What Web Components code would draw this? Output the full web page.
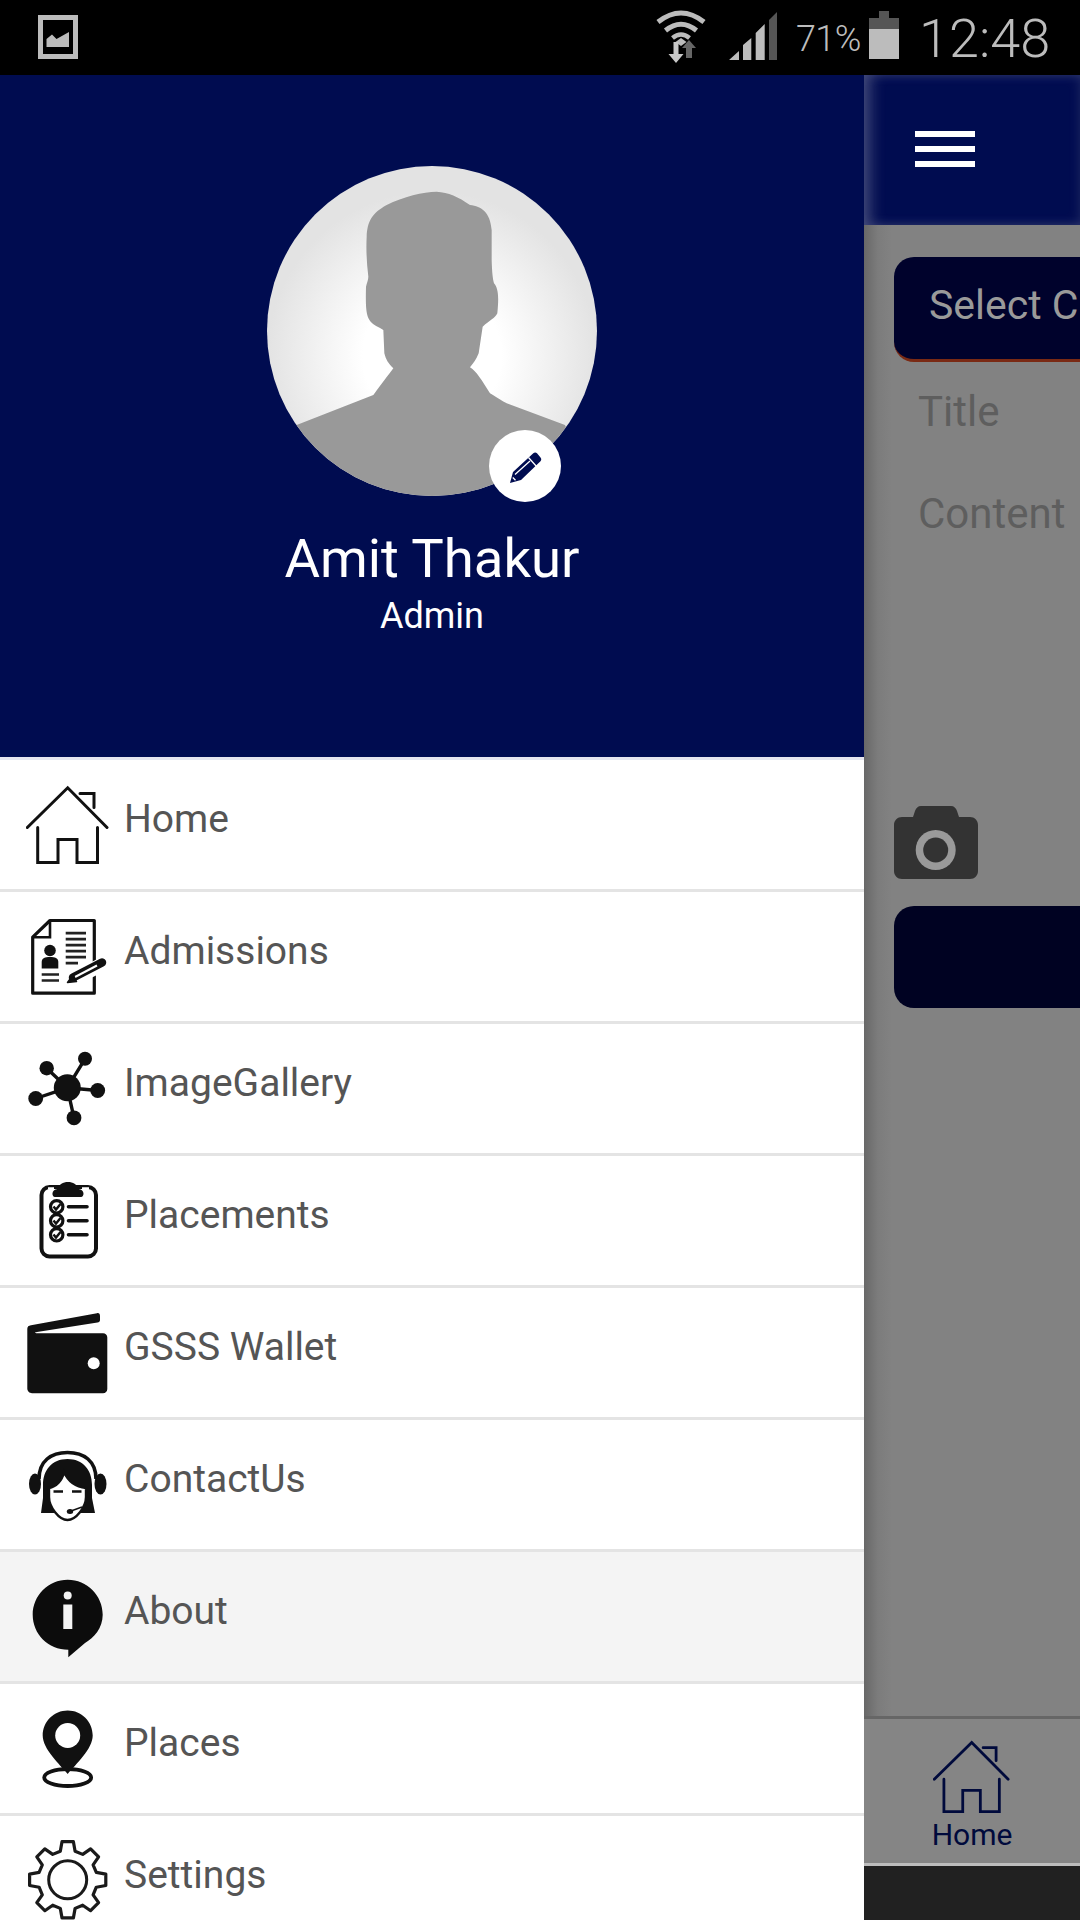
<!DOCTYPE html>
<html lang="en">
<head>
<meta charset="utf-8">
<title>Drawer</title>
<style>
  html, body { margin: 0; padding: 0; background: #000; }
  body { width: 1080px; height: 1920px; overflow: hidden; font-family: Roboto, "Liberation Sans", sans-serif; }
  phone-screen { height: 1920px; }
</style>
</head>
<body>
<phone-screen>
  <status-bar slot="status"></status-bar>
  <nav-drawer slot="drawer">
    <profile-card name="Amit Thakur" role="Admin"></profile-card>
    <menu-item icon="home">Home</menu-item>
    <menu-item icon="admissions">Admissions</menu-item>
    <menu-item icon="gallery">ImageGallery</menu-item>
    <menu-item icon="placements">Placements</menu-item>
    <menu-item icon="wallet">GSSS Wallet</menu-item>
    <menu-item icon="contact">ContactUs</menu-item>
    <menu-item icon="about" active>About</menu-item>
    <menu-item icon="places">Places</menu-item>
    <menu-item icon="settings">Settings</menu-item>
  </nav-drawer>
  <main-panel slot="main"></main-panel>
</phone-screen>

<script>
function gearPath() {
  var cx = 41.7, cy = 40.8, pts = [], i, a;
  var spec = [[29.5, -14.5], [38.5, -8.5], [38.5, 8.5], [29.5, 14.5]];
  for (i = 0; i < 8; i++) {
    spec.forEach(function (s) {
      a = (i * 45 + s[1] - 90) * Math.PI / 180;
      pts.push((cx + s[0] * Math.cos(a)).toFixed(1) + ' ' + (cy + s[0] * Math.sin(a)).toFixed(1));
    });
  }
  return 'M' + pts.join('L') + 'Z';
}

var HOME_PATHS = '<path d="M1.3 44.5 41.7 4.8 81 44.5M54 10.5H68V24.5M11.7 44.5V79.5H32V56.5H51V79.5H71.5V44.5" fill="none" stroke="currentColor" stroke-width="3" stroke-linecap="round"/>';

var ICONS = {
  home: HOME_PATHS,
  admissions:
    '<path d="M24 5.5H68.3V78.2H6.7V22.2Z" fill="none" stroke="#111" stroke-width="3.2" stroke-linejoin="round"/>' +
    '<path d="M24 5.5V22.2H6.7" fill="none" stroke="#111" stroke-width="2.6"/>' +
    '<path d="M39.7 18.2H60M39.7 24.2H60M39.7 30.2H60M39.7 36.2H60M39.7 42.2H60M39.7 48.2H52" stroke="#222" stroke-width="2.8"/>' +
    '<circle cx="24" cy="35.5" r="5.8" fill="#111"/><path d="M15.7 53.5V47C15.7 43 19 42 24 42S32.3 43 32.3 47V53.5Z" fill="#111"/>' +
    '<path d="M15.7 59.5H33M15.7 65.5H33" stroke="#222" stroke-width="2.6"/>' +
    '<path d="M42 67 77 49" stroke="#fff" stroke-width="14"/>' +
    '<path d="M47 62.5 76 47.5" stroke="#111" stroke-width="8.5" stroke-linecap="round"/>' +
    '<path d="M49 62 71 50.500" stroke="#fff" stroke-width="2"/>' +
    '<path d="M41.5 67.5 47 60 50.5 66.5Z" fill="#111" stroke="#111" stroke-width="1.5" stroke-linejoin="round"/>',
  gallery:
    '<path d="M41.3 40.8 59 11.8M41.3 40.8 20.7 21.2M41.3 40.8 71.7 43.5M41.3 40.8 9.7 51.5M41.3 40.8 48 70.8" stroke="#111" stroke-width="3.4"/>' +
    '<g fill="#111"><circle cx="41.3" cy="40.8" r="13.5"/><circle cx="59" cy="11.8" r="7"/><circle cx="20.7" cy="21.2" r="7.2"/><circle cx="71.7" cy="43.5" r="7.4"/><circle cx="9.7" cy="51.5" r="7.4"/><circle cx="48" cy="70.8" r="7.4"/></g>',
  placements:
    '<rect x="15.5" y="8" width="54.5" height="69.5" rx="8" fill="none" stroke="#111" stroke-width="4"/>' +
    '<path d="M29 18C25.5 18 25 10.500 31.5 10C33 5.5 37 3 42 3S51 5.5 52.500 10C59 10.500 58.500 18 55 18Z" fill="#111"/>' +
    '<path d="M28 9.500H22M56 9.500H63" stroke="#fff" stroke-width="2.500"/>' +
    '<g fill="#fff" stroke="#111" stroke-width="3.2"><circle cx="30.7" cy="27.8" r="6.2"/><circle cx="30.7" cy="41.8" r="6.2"/><circle cx="30.7" cy="55.8" r="6.2"/></g>' +
    '<path d="M27.5 27.5 30 30.5 34.5 25M27.5 41.5 30 44.5 34.5 39M27.5 55.5 30 58.5 34.5 53" fill="none" stroke="#111" stroke-width="2.4"/>' +
    '<path d="M42.5 27.8H61M42.5 41.8H61M42.5 55.8H61" stroke="#111" stroke-width="3.6" stroke-linecap="round"/>',
  wallet:
    '<path d="M1.3 18C1.3 15.5 2.5 14.8 5 14.3L71 2.2C73 1.8 74 3 74 5V9C74 10.5 73 11.2 71.5 11.4L11 21C8.5 21.4 8.5 22.2 11 22.2H77C79.5 22.2 81.3 24 81.3 26.5V78C81.3 80.5 79.5 82.2 77 82.2H6C3.5 82.2 1.3 80.2 1.3 77.5Z" fill="#111"/>' +
    '<circle cx="67.7" cy="52.2" r="6" fill="#fff"/>',
  contact:
    '<ellipse cx="9" cy="41" rx="6" ry="10.5" fill="#111"/><ellipse cx="74.5" cy="41" rx="6" ry="10.5" fill="#111"/>' +
    '<path d="M13 36C13 18 25 9.5 41.5 9.5S70 18 70 36" fill="none" stroke="#111" stroke-width="3.6"/>' +
    '<path d="M41.5 16C57 16 66 27 66 42V55L69 70H15L17 55V42C17 27 26 16 41.5 16Z" fill="#111"/>' +
    '<path d="M23 45C30 44 36 38 38 29 42 38 50 44 60 45V54C60 64 50 77 41.5 77 33 77 23 64 23 54Z" fill="#fff" stroke="#111" stroke-width="2.4"/>' +
    '<path d="M27.5 48.5H37M46 48.5H55.5" stroke="#111" stroke-width="2.4"/>' +
    '<path d="M45 68 56 64" stroke="#111" stroke-width="1.6"/><ellipse cx="44" cy="68.5" rx="3.2" ry="2.5" fill="#111"/>',
  about:
    '<path d="M41.7 4.8C61 4.8 76.7 20.5 76.7 39.8 76.7 53 68 63 59 68L42.3 82.2V74.800C22 74.800 6.7 59 6.7 39.800S22.4 4.8 41.7 4.8Z" fill="#0c0c0c"/>' +
    '<circle cx="41.7" cy="20.5" r="4" fill="#f4f4f4"/><rect x="37.3" y="29.5" width="9" height="24.5" fill="#f4f4f4"/>',
  places:
    '<ellipse cx="41.7" cy="70.500" rx="23.500" ry="8.500" fill="none" stroke="#111" stroke-width="3.800"/>' +
    '<path d="M41.7 3.5C55.5 3.5 66.7 14.7 66.7 28.5 66.7 42 50 57 41.7 67 33.4 57 16.7 42 16.7 28.5 16.7 14.7 27.9 3.5 41.7 3.5Z" fill="#111" stroke="#fff" stroke-width="0"/>' +
    '<path d="M41.7 67 24 50 20 60 41.7 70.500 63 60 59 50Z" fill="none"/>' +
    '<circle cx="41.7" cy="28.5" r="12.5" fill="#fff"/>',
  settings:
    '<path d="' + gearPath() + '" fill="none" stroke="#1a1a1a" stroke-width="3.200" stroke-linejoin="round"/>' +
    '<circle cx="41.7" cy="40.8" r="19" fill="none" stroke="#1a1a1a" stroke-width="3"/>'
};

function make(tag, html, init) {
  customElements.define(tag, class extends HTMLElement {
    constructor() {
      super();
      this.attachShadow({ mode: 'open' }).innerHTML = html;
    }
    connectedCallback() { if (init) init.call(this, this.shadowRoot); }
  });
}

customElements.define('menu-icon', class extends HTMLElement {
  static get observedAttributes() { return ['name']; }
  constructor() {
    super();
    this.attachShadow({ mode: 'open' }).innerHTML = `
<style>
  :host { display: block; flex: none; width: 84px; height: 84px; color: #111; }
  svg { display: block; filter: blur(.35px); }
</style>
<svg width="84" height="84" viewBox="0 0 84 84"></svg>`;
  }
  attributeChangedCallback(n, o, v) {
    this.shadowRoot.querySelector('svg').innerHTML = ICONS[v] || '';
  }
});

make('phone-screen', `
<style>
  :host { display: grid; grid-template-columns: 864px 216px; grid-template-rows: 75px 1845px; width: 1080px; height: 1920px; background: #000; overflow: hidden; }
  .s { display: block; grid-column: 1 / 3; }
  .d { display: block; min-height: 0; }
  .m { display: block; min-height: 0; }
</style>
<div class="s"><slot name="status"></slot></div>
<div class="d"><slot name="drawer"></slot></div>
<div class="m"><slot name="main"></slot></div>`);

make('status-bar', `
<style>
  :host { display: flex; align-items: flex-start; box-sizing: border-box; width: 1080px; height: 75px; padding-right: 27px; background: #000; color: #bcbcbc; font-family: Roboto, "Liberation Sans", sans-serif; font-weight: 300; overflow: hidden; }
  svg { display: block; flex: none; }
  .pic { margin: 15px 0 0 38px; }
  .grow { flex: 1; }
  .wifi { margin-top: 9px; }
  .sig { margin: 12px 0 0 23px; }
  .pct { font-size: 36px; line-height: 42px; margin: 18px 0 0 19px; width: 65px; letter-spacing: -.6px; white-space: nowrap; }
  .bat { margin: 11px 0 0 8px; }
  .time { font-size: 54px; line-height: 62px; margin: 8px 0 0 20px; width: 134px; white-space: nowrap; }
</style>
<svg class="pic" width="40" height="44" viewBox="0 0 40 44"><path fill-rule="evenodd" d="M0 0H40V44H0ZM5 5V39H35V5Z" fill="#bcbcbc"/><path d="M8.500 32V24L14 19.500 18.500 24 31 17V32Z" fill="#bcbcbc"/></svg>
<div class="grow"></div>
<svg class="wifi" width="50" height="54" viewBox="0 0 50 54">
  <g fill="none" stroke="#bcbcbc"><path d="M2 13Q25-5 48 13" stroke-width="5"/><path d="M9.500 21.500Q25 9 40.500 21.500" stroke-width="5"/><path d="M16.500 29Q25 22 33.500 29" stroke-width="4.500"/></g>
  <path d="M19.500 33 25 29 30.500 33 25 37Z" fill="#bcbcbc"/>
  <path d="M30 49V39H26L33 31 40 39H36V49Z" fill="#666"/>
  <path d="M17.500 33H22.500V45H27.500L20 54 12.500 45H17.500Z" fill="#c8c8c8"/>
</svg>
<svg class="sig" width="48" height="48" viewBox="0 0 48 48">
  <path d="M0 48 10 39V48ZM14 33 22.300 26V48H14ZM26.700 21 35.700 12V48H26.700Z" fill="#bcbcbc"/><path d="M40 8 48 0V48H40Z" fill="#555"/>
</svg>
<div class="pct">71%</div>
<svg class="bat" width="30" height="48" viewBox="0 0 30 48"><path d="M10 0H20V7H30V18H0V7H10Z" fill="#555"/><path d="M0 18H30V48H0Z" fill="#bcbcbc"/></svg>
<div class="time">12:48</div>`);

make('nav-drawer', `
<style>
  :host { display: flex; flex-direction: column; width: 864px; height: 1845px; background: #fff; overflow: hidden; }
</style>
<slot></slot>`);

make('profile-card', `
<style>
  :host { display: flex; flex-direction: column; align-items: center; flex: none; box-sizing: border-box; width: 864px; height: 685px; padding-top: 91px; background: #000c50; border-bottom: 3px solid #e6e6ef; color: #fff; font-family: Roboto, "Liberation Sans", sans-serif; }
  .av { position: relative; width: 330px; height: 330px; flex: none; }
  .av > svg { display: block; }
  .edit { position: absolute; left: 222px; top: 264px; width: 72px; height: 72px; border-radius: 50%; background: #fff; }
  .edit svg { display: block; }
  .name { font-size: 54.5px; line-height: 60px; margin-top: 32px; }
  .role { font-size: 36px; line-height: 44px; margin-top: 6px; }
</style>
<div class="av">
  <svg width="330" height="330" viewBox="0 0 330 330">
    <defs>
      <radialGradient id="g" gradientUnits="userSpaceOnUse" cx="165" cy="190" r="165"><stop offset=".42" stop-color="#fff"/><stop offset="1" stop-color="#e3e3e3"/></radialGradient>
      <clipPath id="c"><circle cx="165" cy="165" r="165"/></clipPath>
    </defs>
    <circle cx="165" cy="165" r="165" fill="url(#g)"/>
    <g clip-path="url(#c)"><path fill="#999" transform="translate(-27 -16) scale(.33333)" d="M380 260C382 215 395 190 440 165 490 140 550 125 590 125 625 127 655 140 690 165 725 170 750 185 755 240L755 330C756 365 758 385 762 400 775 415 777 440 772 490 765 505 750 510 728 530L716 610C708 630 700 640 690 652 710 665 725 690 750 730 775 745 790 755 800 760L975 825 1100 1100H100L170 825 400 735C415 715 430 695 460 655 445 640 438 630 433 610L430 540C415 530 400 525 392 515 380 500 376 485 378 410 380 400 385 390 385 380 380 340 378 300 380 260Z"/></g>
  </svg>
  <div class="edit"><svg width="72" height="72" viewBox="0 0 72 72"><path d="M21 53 24 42 44.300 23.300C45.500 22.200 47 22.300 48 23.300L51.500 27.500C52.500 28.700 52.500 30 51.500 31.200L32 50Z" fill="#000c50"/><path d="M39.500 27.500 47.500 36.500M26 44.500 41 31M23.800 47.500 26.500 50.300" stroke="#fff" stroke-width="1.300" fill="none"/></svg></div>
</div>
<div class="name"></div>
<div class="role"></div>`, function (r) {
  r.querySelector('.name').textContent = this.getAttribute('name');
  r.querySelector('.role').textContent = this.getAttribute('role');
});

make('menu-item', `
<style>
  :host { display: flex; align-items: center; flex: none; box-sizing: border-box; width: 864px; height: 132px; padding-left: 26px; background: #fff; border-bottom: 3px solid #e4e4e4; color: #555; font: 400 39px/46px Roboto, "Liberation Sans", sans-serif; }
  :host([active]) { background: #f4f4f4; }
  .t { margin: 0 0 11px 14px; white-space: nowrap; }
</style>
<menu-icon></menu-icon><span class="t"><slot></slot></span>`, function (r) {
  r.querySelector('menu-icon').setAttribute('name', this.getAttribute('icon'));
});

make('main-panel', `
<style>
  :host { display: flex; flex-direction: column; width: 216px; height: 1845px; overflow: hidden; background: #828282; font-family: Roboto, "Liberation Sans", sans-serif; }
  .bar { flex: none; box-sizing: border-box; height: 150px; padding: 56px 0 0 51px; background: #000c50; box-shadow: inset 0 0 12px rgba(190,190,200,.16), inset 12px 0 14px -4px rgba(190,190,200,.26); }
  .bar i { display: block; width: 60px; height: 6px; background: #fff; margin-bottom: 9px; }
  .content { flex: 1; min-height: 0; box-sizing: border-box; padding: 32px 0 0 30px; background: linear-gradient(90deg, #686868, #7c7c7c 14px, #828282 28px); overflow: hidden; }
  .select { box-sizing: border-box; width: 240px; height: 105px; padding-left: 35px; border-radius: 20px 0 0 20px; background: #00022c; border-bottom: 3px solid #7a2a14; color: #9a9a9a; font-size: 41px; line-height: 96px; white-space: nowrap; overflow: hidden; }
  .field { height: 102px; padding-left: 24px; color: #5e5e5e; font-size: 42px; line-height: 100px; white-space: nowrap; }
  .cam { display: block; margin-top: 240px; }
  .btn { width: 240px; height: 102px; margin-top: 27px; border-radius: 20px 0 0 20px; background: #000222; }
  .tabs { flex: none; box-sizing: border-box; height: 150px; padding-top: 19px; border-top: 3px solid #666; border-bottom: 3px solid #bdbdbd; background: #858585; color: #000a3c; text-align: center; font-size: 30px; line-height: 34px; }
  .tabs svg { display: block; margin: 0 auto 4px; }
  .nav { flex: none; height: 54px; background: #212121; }
</style>
<div class="bar"><i></i><i></i><i></i></div>
<div class="content">
  <div class="select">Select C</div>
  <div class="field">Title</div>
  <div class="field">Content</div>
  <svg class="cam" width="84" height="73" viewBox="0 0 84 73">
    <path d="M8 11H19L21 5C22 2 24 0 27 0H57C60 0 62 2 63 5L65 11H76C80.500 11 84 14.500 84 19V65C84 69.500 80.500 73 76 73H8C3.500 73 0 69.500 0 65V19C0 14.500 3.500 11 8 11Z" fill="#333"/>
    <circle cx="41.700" cy="44" r="20" fill="#9a9a9a"/><circle cx="41.700" cy="44" r="12.500" fill="#333"/>
  </svg>
  <div class="btn"></div>
</div>
<div class="tabs">
  <svg width="78" height="76" viewBox="0 0 84 82">${HOME_PATHS}</svg>
  <div>Home</div>
</div>
<div class="nav"></div>`);
</script>
</body>
</html>
